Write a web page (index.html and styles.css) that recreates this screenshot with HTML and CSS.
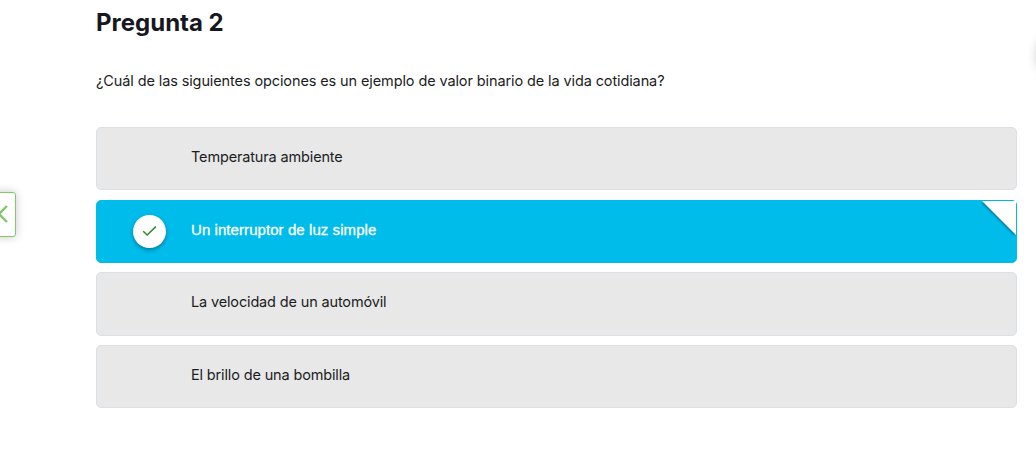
FILE: index.html
```html
<!DOCTYPE html>
<html lang="es">
  <head>
    <meta charset="UTF-8" />
    <meta name="viewport" content="width=device-width, initial-scale=1.0" />
    <title>Pregunta 2</title>
    <link rel="stylesheet" href="styles.css">
  </head>
  <body>
    <button class="prev" type="button" aria-label="Anterior">
      <svg width="8" height="18" viewBox="0 0 8 18">
        <path d="M7 1 L-1 9 L7 17" />
      </svg>
    </button>
    <main class="question">
      <h1>Pregunta 2</h1>
      <p class="prompt">¿Cuál de las siguientes opciones es un ejemplo de valor binario de la vida cotidiana?</p>
      <ul class="options">
        <li class="option">
          <span class="label">Temperatura ambiente</span>
        </li>
        <li class="option selected">
          <span class="check">
            <svg width="15" height="12" viewBox="0 0 15 12">
              <path d="M1.2 6.2 L5.2 10 L13.8 1.6" />
            </svg>
          </span>
          <span class="label">Un interruptor de luz simple</span>
          <svg class="corner" width="36" height="40" viewBox="0 0 36 40">
            <path d="M1 1 H35 V35 Z" />
          </svg>
        </li>
        <li class="option">
          <span class="label">La velocidad de un automóvil</span>
        </li>
        <li class="option">
          <span class="label">El brillo de una bombilla</span>
        </li>
      </ul>
    </main>
    <div class="next"></div>
  </body>
</html>
```

FILE: styles.css
```css
body {
  margin: 0;
  height: 466px;
  position: relative;
  overflow: hidden;
  background-color: #fff;
  color: #1b1c1d;
  font-family: Inter, "Liberation Sans", sans-serif;
  font-size: 14.5px;
  letter-spacing: -0.11px;
}

.question {
  padding: 7px 19px 0 96px;
}

h1 {
  margin: 0;
  font-size: 24px;
  line-height: 32px;
  font-weight: 700;
  letter-spacing: 0;
  color: #17181f;
}

.prompt {
  margin: 32px 0 0;
  line-height: 20px;
}

.options {
  list-style: none;
  margin: 36px 0 0;
  padding: 0;
  display: grid;
  gap: 9.3px;
}

.option {
  box-sizing: border-box;
  height: 63.4px;
  display: grid;
  grid-template-columns: 94px 1fr;
  position: relative;
  background-color: #e8e8e8;
  border: 1px solid #dbe0e7;
  border-radius: 5px;
}

.label {
  grid-column: 2;
  grid-row: 1;
  padding-top: 19px;
  line-height: 20px;
  letter-spacing: -0.15px;
}

.selected {
  background-color: #00bceb;
  border-color: #00bceb;
  color: #fff;
}

.selected .label {
  font-family: "Liberation Sans", Arial, sans-serif;
  font-size: 15px;
  letter-spacing: 0.07px;
  -webkit-text-stroke: 0.3px #fff;
}

.check {
  grid-column: 1;
  grid-row: 1;
  width: 33px;
  height: 33px;
  margin: 14px 0 0 36px;
  display: flex;
  align-items: center;
  justify-content: center;
  background-color: #fff;
  border-radius: 50%;
  box-shadow: 0 2px 4px rgba(0, 0, 0, 0.35);
}

.check path {
  fill: none;
  stroke: #2f8a2f;
  stroke-width: 1.5;
}

.corner {
  position: absolute;
  top: -1px;
  right: -1px;
}

.corner path {
  fill: #fff;
  filter: drop-shadow(-1px 1px 1px rgba(0, 0, 0, 0.35));
}

.prev {
  position: absolute;
  left: -10px;
  top: 192px;
  box-sizing: border-box;
  width: 26px;
  height: 45px;
  padding: 0 0 2px 9px;
  display: flex;
  align-items: center;
  background-color: #fff;
  border: 1px solid #80c86a;
  border-radius: 3px;
  box-shadow: 0 0 10px rgba(0, 0, 0, 0.22);
}

.prev path {
  fill: none;
  stroke: #85c46e;
  stroke-width: 2.4;
}

/* only the shadow of the floating button reaches the page */
.next {
  position: absolute;
  left: 1038px;
  top: 34px;
  width: 42px;
  height: 42px;
  border-radius: 50%;
  box-shadow: 0 0 12px rgba(0, 0, 0, 0.28);
}
```
